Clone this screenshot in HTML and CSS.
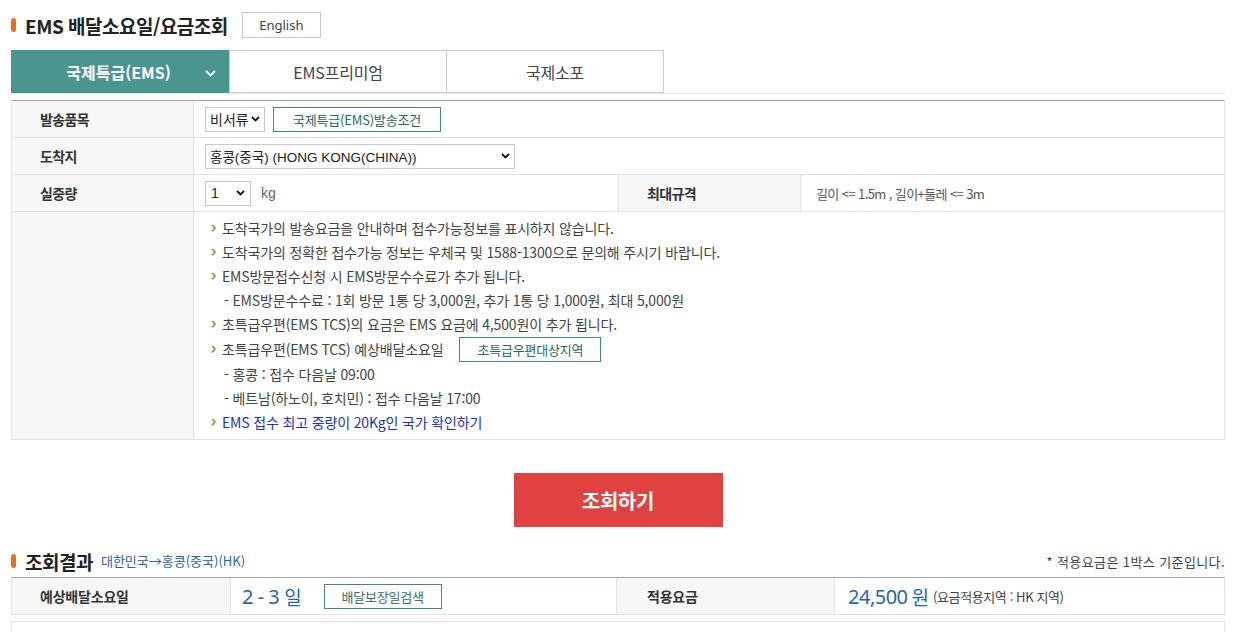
FILE: index.html
```html
<!DOCTYPE html>
<html lang="ko">
<head>
<meta charset="utf-8">
<title>EMS 배달소요일/요금조회</title>
<link rel="stylesheet" href="styles.css">
</head>
<body>
<div class="page">
  <div class="title-row">
    <h1 class="heading"><span class="dot"></span>EMS 배달소요일/요금조회</h1>
    <a class="lang-btn">English</a>
  </div>

  <div class="tabs">
    <div class="tab active">국제특급(EMS)
      <svg class="tab-chev" width="11" height="7" viewBox="0 0 11 7"><path d="M1 1l4.5 4.5L10 1" fill="none" stroke="#fff" stroke-width="1.8"/></svg>
    </div>
    <div class="tab">EMS프리미엄</div>
    <div class="tab">국제소포</div>
  </div>

  <div class="form-table">
    <div class="row">
      <div class="th">발송품목</div>
      <div class="td">
        <div class="select sel-type">비서류<svg class="chev" width="9" height="6" viewBox="0 0 9 6"><path d="M1 1l3.5 3.5L8 1" fill="none" stroke="#111" stroke-width="1.8"/></svg></div>
        <a class="line-btn btn-cond">국제특급(EMS)발송조건</a>
      </div>
    </div>
    <div class="row">
      <div class="th">도착지</div>
      <div class="td">
        <div class="select sel-dest">홍콩(중국) (HONG KONG(CHINA))<svg class="chev" width="9" height="6" viewBox="0 0 9 6"><path d="M1 1l3.5 3.5L8 1" fill="none" stroke="#111" stroke-width="1.8"/></svg></div>
      </div>
    </div>
    <div class="row">
      <div class="th">실중량</div>
      <div class="td td-weight">
        <div class="select sel-kg">1<svg class="chev" width="9" height="6" viewBox="0 0 9 6"><path d="M1 1l3.5 3.5L8 1" fill="none" stroke="#111" stroke-width="1.8"/></svg></div>
        <span class="unit">kg</span>
      </div>
      <div class="th th-mid">최대규격</div>
      <div class="spec"><span class="spec-text">길이 &lt;= 1.5m , 길이+둘레 &lt;= 3m</span></div>
    </div>
    <div class="row row-info">
      <div class="th"></div>
      <div class="td">
        <ul class="info">
          <li class="b">도착국가의 발송요금을 안내하며 접수가능정보를 표시하지 않습니다.</li>
          <li class="b">도착국가의 정확한 접수가능 정보는 우체국 및 1588-1300으로 문의해 주시기 바랍니다.</li>
          <li class="b">EMS방문접수신청 시 EMS방문수수료가 추가 됩니다.</li>
          <li class="d">- EMS방문수수료 : 1회 방문 1통 당 3,000원, 추가 1통 당 1,000원, 최대 5,000원</li>
          <li class="b">초특급우편(EMS TCS)의 요금은 EMS 요금에 4,500원이 추가 됩니다.</li>
          <li class="b li-btn">초특급우편(EMS TCS) 예상배달소요일 <a class="line-btn btn-area">초특급우편대상지역</a></li>
          <li class="d">- 홍콩 : 접수 다음날 09:00</li>
          <li class="d">- 베트남(하노이, 호치민) : 접수 다음날 17:00</li>
          <li class="b link">EMS 접수 최고 중량이 20Kg인 국가 확인하기</li>
        </ul>
      </div>
    </div>
  </div>

  <div class="search-wrap"><a class="search-btn">조회하기</a></div>

  <div class="result-head">
    <h2 class="heading h2"><span class="dot"></span>조회결과</h2>
    <span class="route">대한민국→홍콩(중국)(HK)</span>
    <span class="note">* 적용요금은 1박스 기준입니다.</span>
  </div>

  <div class="result-table">
    <div class="rth rth1">예상배달소요일</div>
    <div class="rtd rtd1"><span class="big">2 - 3</span><span class="big-unit">일</span><a class="line-btn btn-guar">배달보장일검색</a></div>
    <div class="rth rth2">적용요금</div>
    <div class="rtd rtd2"><span class="big">24,500</span><span class="big-unit">원</span><span class="small">(요금적용지역 : HK 지역)</span></div>
  </div>

  <div class="extra-box"></div>
</div>
</body>
</html>
```

FILE: styles.css
```css
* { box-sizing: border-box; }
html, body { margin: 0; padding: 0; background: #fff; }
body {
  font-family: "Noto Sans CJK KR", "Noto Sans", sans-serif;
  color: #444;
  font-size: 14px;
}
a { text-decoration: none; color: inherit; cursor: pointer; }
.page { width: 1214px; margin-left: 11px; }

.title-row { height: 50px; display: flex; align-items: center; }
.heading {
  margin: 0; display: flex; align-items: center;
  font-size: 19px; font-weight: 700; color: #222; letter-spacing: -0.5px;
  line-height: 1;
}
.dot {
  display: inline-block; width: 5px; height: 14px; border-radius: 3px;
  background: #e8701e; margin-right: 9px;
}
.lang-btn {
  margin-left: 14px; width: 79px; height: 26px; border: 1px solid #c9c9c9;
  display: flex; align-items: center; justify-content: center;
  font-family: "Noto Sans", sans-serif; font-size: 13px; color: #444;
  margin-top: -1px;
}

.tabs { display: flex; height: 44px; border-bottom: 1px solid #e6e6e6; }
.tab {
  width: 218px; height: 43px; display: flex; align-items: center; justify-content: center;
  font-size: 16px; color: #444; border: 1px solid #cdcdcd; margin-left: -1px;
  position: relative; letter-spacing: -0.2px;
}
.tab.active {
  width: 219px; margin-left: 0; background: #4b9591; border-color: #4b9591;
  color: #fff; font-weight: 700; letter-spacing: 0; padding-right: 4px;
}
.tab-chev { position: absolute; left: 193px; top: 19px; }

.form-table {
  margin-top: 6px; border-top: 1px solid #9aaba8; border-left: 1px solid #e3e3e3; border-right: 1px solid #e3e3e3;
}
.row { display: flex; min-height: 37px; border-bottom: 1px solid #e3e3e3; }
.th {
  width: 182px; flex: none; background: #f7f7f7; border-right: 1px solid #e3e3e3;
  display: flex; align-items: center; padding-left: 28px;
  font-size: 14px; font-weight: 700; color: #333; letter-spacing: -0.6px;
}
.td { flex: 1; display: flex; align-items: center; padding-left: 11px; }
.td-weight { flex: none; width: 424px; }
.th-mid { width: 183px; border-left: 1px solid #e3e3e3; padding-left: 28px; }
.spec { flex: 1; display: flex; align-items: center; padding-left: 15px; }
.spec-text { font-size: 13px; color: #555; letter-spacing: -0.6px; }

.select {
  height: 25px; border: 1px solid #c8c8c8; background: #fff; display: flex; align-items: center;
  justify-content: space-between; padding: 0 4px; font-size: 14px; color: #222;
  font-family: "Liberation Sans", "Noto Sans CJK KR", sans-serif;
}
.sel-type { width: 60px; }
.sel-dest { width: 310px; font-size: 13.5px; }
.sel-kg { width: 46px; padding-left: 5px; padding-right: 5px; }
.unit { margin-left: 10px; font-size: 14px; color: #666; font-family: "Liberation Sans", sans-serif; }

.line-btn {
  display: inline-flex; align-items: center; justify-content: center;
  height: 25px; border: 1px solid #44857f; color: #2e6763; font-size: 13px; letter-spacing: -0.2px;
}
.btn-cond { margin-left: 8px; width: 168px; }
.btn-area { margin-left: 16px; width: 142px; }
.btn-guar { margin-left: 22px; width: 118px; color: #3c6f6b; }

.row-info .td { align-items: flex-start; padding-left: 16px; }
.info { list-style: none; margin: 0; padding: 4px 0 5px; }
.info li { height: 24px; font-size: 14px; color: #444; letter-spacing: -0.15px; display: flex; align-items: center; }
.info li.b::before {
  content: ""; display: inline-block; width: 5px; height: 7px; margin-right: 6px; margin-left: 1px;
  background: #8e9a3e; clip-path: polygon(0 0, 45% 0, 100% 50%, 45% 100%, 0 100%, 55% 50%);
}
.info li.d { padding-left: 14px; }
.info li.li-btn { height: 26px; }
.info li.link { color: #2233b5; }

.search-wrap { display: flex; justify-content: center; padding-top: 33px; height: 108px; }
.search-btn {
  width: 209px; height: 54px; background: #e04242; color: #fff; font-size: 20px; font-weight: 700;
  display: flex; align-items: center; justify-content: center; letter-spacing: -0.3px;
}

.result-head { display: flex; align-items: center; height: 26px; margin-bottom: 3px; }
.h2 { font-size: 19px; }
.route { margin-left: 8px; font-size: 13px; color: #2a64a6; letter-spacing: 0; margin-top: -1px; }
.note { margin-left: auto; font-size: 13px; color: #444; letter-spacing: 0.4px; }

.result-table {
  display: flex; height: 38px; border-top: 1px solid #9aaba8; border-bottom: 1px solid #e3e3e3;
  border-left: 1px solid #e3e3e3; border-right: 1px solid #e3e3e3;
}
.rth {
  background: #f7f7f7; display: flex; align-items: center;
  font-size: 14px; font-weight: 700; color: #333; letter-spacing: -0.2px;
}
.rth1 { width: 219px; padding-left: 28px; border-right: 1px solid #e3e3e3; }
.rtd { display: flex; align-items: center; }
.rtd1 { width: 386px; padding-left: 11px; border-right: 1px solid #e3e3e3; }
.rth2 { width: 218px; padding-left: 30px; border-right: 1px solid #e3e3e3; }
.rtd2 { flex: 1; padding-left: 13px; }
.big { font-size: 20px; color: #2a64a6; font-family: "Noto Sans", sans-serif; letter-spacing: -0.5px; }
.big-unit { font-size: 19px; color: #2a64a6; margin-left: 5px; }
.rtd2 .big-unit { margin-right: 4px; margin-left: 4px; }
.small { font-size: 13px; color: #444; letter-spacing: -0.4px; }

.extra-box { margin-top: 6px; height: 40px; border: 1px solid #e3e3e3; }
```
